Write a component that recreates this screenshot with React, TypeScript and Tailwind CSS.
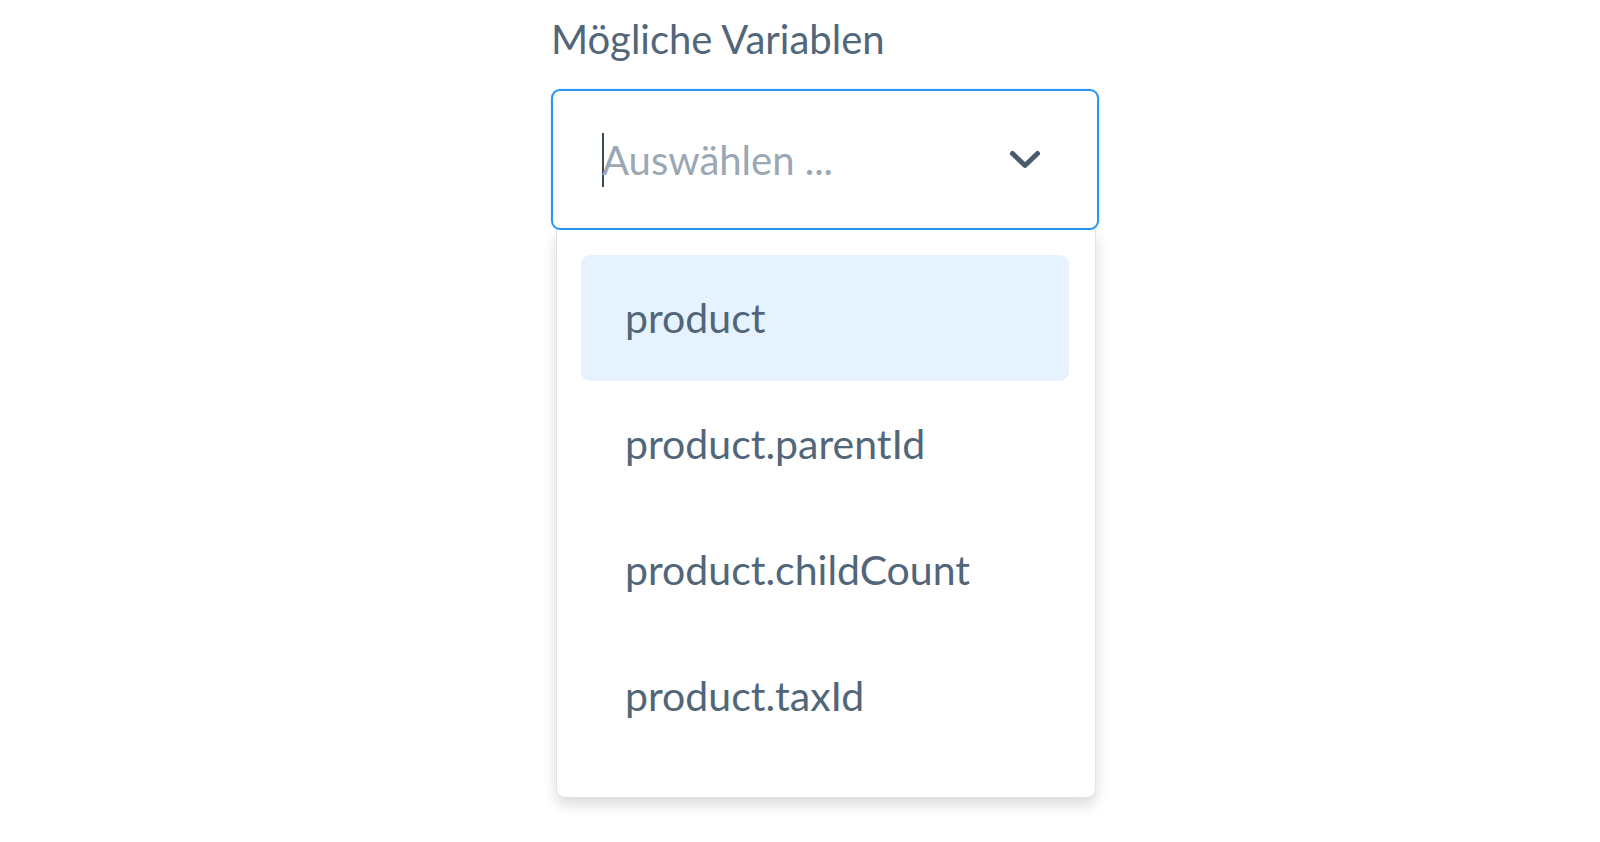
const options = ["product", "product.parentId", "product.childCount", "product.taxId"];

function Chevron() {
  return (
    <svg width="32" height="20" viewBox="0 0 32 20" fill="none">
      <path
        d="M3.5 3.5 L16 15.5 L28.5 3.5"
        stroke="#4a5b6d"
        strokeWidth="5"
        strokeLinecap="round"
        strokeLinejoin="round"
      />
    </svg>
  );
}

function App() {
  return (
    <div
      className="w-[1600px] h-[842px] bg-white overflow-hidden"
      style={{ fontFamily: "'Source Sans Pro', Lato, 'Noto Sans', sans-serif" }}
    >
      <div className="ml-[551px] w-[548px] pt-[12px]">
        <label className="block text-[40px] leading-[54px] text-[#52667a]">
          Mögliche Variablen
        </label>
        <div className="mt-[23px] h-[141px] border-2 border-[#2a94f4] rounded-[9px] flex items-center pl-[49px] pr-[56px] shadow-[0_0_2px_rgba(42,148,244,0.35)]">
          <span className="w-[2px] h-[54px] bg-[#3d4a5a] -mr-[2px]" />
          <span className="flex-1 text-[40px] text-[#9aa7b4]">Auswählen ...</span>
          <Chevron />
        </div>
        <div className="ml-[5px] mr-[3px] border border-t-0 border-[#dfe3e8] rounded-b-[9px] bg-white shadow-[0_7px_14px_rgba(0,0,0,0.14)] px-[24px] pt-[25px] pb-[38px]">
          {options.map((o, i) => (
            <div
              key={o}
              className={
                "h-[126px] flex items-center pl-[44px] rounded-[9px] text-[41px] text-[#52667a] " +
                (i === 0 ? "bg-[#e6f3ff] mr-[2px]" : "")
              }
            >
              {o}
            </div>
          ))}
        </div>
      </div>
    </div>
  );
}

export default App;
